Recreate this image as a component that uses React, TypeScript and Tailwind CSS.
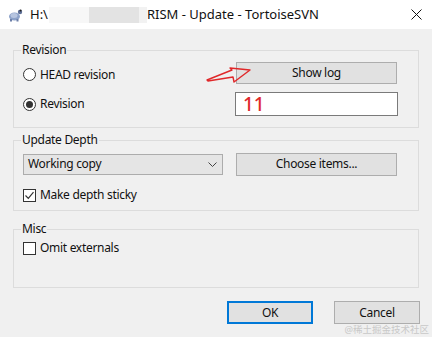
import React from "react";

const font = { fontFamily: '"Noto Sans", "Noto Sans CJK SC", sans-serif' };

const Radio = ({ checked, label, className }: { checked?: boolean; label: string; className?: string }) => (
  <label className={"flex items-center gap-[4px] " + (className ?? "")}>
    <span className="flex items-center justify-center w-[13px] h-[13px] rounded-full border border-[#333] bg-white">
      {checked && <span className="w-[7px] h-[7px] rounded-full bg-[#333]" />}
    </span>
    <span>{label}</span>
  </label>
);

const Checkbox = ({ checked, label }: { checked?: boolean; label: string }) => (
  <label className="flex items-center gap-[4px]">
    <span className="flex items-center justify-center w-[13px] h-[13px] border border-[#333] bg-white">
      {checked && (
        <svg width="11" height="11" viewBox="0 0 11 11">
          <path d="M1.5 5.5 L4.3 8.3 L9.5 2.2" fill="none" stroke="#333" strokeWidth="1.2" />
        </svg>
      )}
    </span>
    <span>{label}</span>
  </label>
);

const Button = ({ label, className }: { label: string; className?: string }) => (
  <button className={"flex items-center justify-center bg-[#e1e1e1] border border-[#adadad] text-[#111] " + (className ?? "")}>
    {label}
  </button>
);

const Group = ({ title, className, children }: { title: string; className?: string; children: React.ReactNode }) => (
  <fieldset className={"border border-[#dcdcdc] " + (className ?? "")}>
    <legend className="ml-[7px] px-[1px] leading-[14px] text-[#111]">{title}</legend>
    {children}
  </fieldset>
);

export default function App() {
  return (
    <div className="relative w-[432px] h-[337px] bg-[#f0f0f0] text-[12px] tracking-[-0.3px] text-[#111] overflow-hidden" style={font}>
      {/* title bar */}
      <div className="h-[29px] bg-white flex items-center text-[13px] tracking-normal">
        <svg className="ml-[8px]" width="15" height="14" viewBox="0 0 15 14">
          <ellipse cx="6.5" cy="8.5" rx="5.5" ry="4" fill="#8da2c9" />
          <ellipse cx="6" cy="7.5" rx="3.5" ry="2.5" fill="#b7c5e0" />
          <circle cx="12" cy="4" r="2.2" fill="#5e6f96" />
          <circle cx="12.6" cy="2.6" r="1" fill="#222" />
          <rect x="2" y="11" width="2" height="2.5" fill="#6c7fa8" />
          <rect x="8.5" y="11" width="2" height="2.5" fill="#6c7fa8" />
        </svg>
        <span className="ml-[7px]">H:\</span>
        <div className="ml-[1px] flex h-[16px]">
          <div className="w-[40px] bg-[#f7f7f7]" />
          <div className="w-[50px] bg-[#e3e3e3]" />
          <div className="w-[8px] bg-[#f2f2f2]" />
        </div>
        <span>RISM - Update - TortoiseSVN</span>
        <svg className="ml-auto mr-[10px]" width="11" height="11" viewBox="0 0 11 11">
          <path d="M0.5 0.5 L10.5 10.5 M10.5 0.5 L0.5 10.5" stroke="#111" strokeWidth="1" />
        </svg>
      </div>

      <div className="flex flex-col pl-[13px] pr-[13px]">
        <Group title="Revision" className="mt-[14px] pt-[5px] pb-[11px]">
          <div className="flex items-center h-[22px] pl-[9px] pr-[21px]">
            <Radio label="HEAD revision" className="mt-[3px]" />
            <Button label="Show log" className="ml-auto w-[161px] h-[22px]" />
          </div>
          <div className="flex items-center h-[24px] mt-[8px] pl-[9px] pr-[20px]">
            <Radio checked label="Revision" />
            <div className="ml-auto w-[163px] h-[24px] bg-white border border-[#7a7a7a] flex items-center pl-[7px] text-[19px] tracking-normal font-medium text-[#e0282a]">
              11
            </div>
          </div>
        </Group>

        <Group title="Update Depth" className="mt-[5px] pt-[5px] pb-[6px]">
          <div className="flex items-center h-[24px] pl-[9px] pr-[21px]">
            <div className="w-[200px] h-[21px] bg-[#e5e5e5] border border-[#acacac] flex items-center pl-[4px]">
              <span>Working copy</span>
              <svg className="ml-auto mr-[5px]" width="9" height="5" viewBox="0 0 9 5">
                <path d="M0.5 0.5 L4.5 4.5 L8.5 0.5" fill="none" stroke="#444" strokeWidth="1" />
              </svg>
            </div>
            <Button label="Choose items..." className="ml-auto w-[161px] h-[23px]" />
          </div>
          <div className="pl-[9px] mt-[10px]">
            <Checkbox checked label="Make depth sticky" />
          </div>
        </Group>

        <Group title="Misc" className="mt-[11px] pt-[3px] pb-[30px]">
          <div className="pl-[9px]">
            <Checkbox label="Omit externals" />
          </div>
        </Group>
      </div>

      <div className="flex justify-end gap-[21px] pr-[12px] mt-[13px]">
        <Button label="OK" className="w-[86px] h-[23px] !border-2 !border-[#0078d7]" />
        <Button label="Cancel" className="w-[86px] h-[23px]" />
      </div>

      {/* annotation arrow */}
      <svg className="absolute left-[200px] top-[60px]" width="60" height="30" viewBox="0 0 60 30">
        <path d="M7 20 L32 10 L30 8 L50 10 L34 22 L33 17 L8 21 Z" fill="none" stroke="#e0282a" strokeWidth="1.4" strokeLinejoin="round" />
      </svg>

      <span className="absolute right-[3px] bottom-[1px] text-[9.5px] leading-[12px] tracking-normal text-[#c8c8c8]">@稀土掘金技术社区</span>
    </div>
  );
}
